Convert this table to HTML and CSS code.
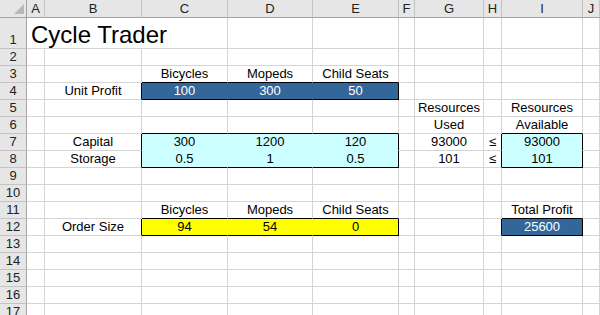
FILE: index.html
```html
<!DOCTYPE html>
<html lang="en">
<head>
<meta charset="utf-8">
<title>Cycle Trader</title>
<link rel="stylesheet" href="styles.css">
</head>
<body>
<table class="sheet">
  <colgroup>
    <col class="w-rh"><col class="w-a"><col class="w-b"><col class="w-c"><col class="w-d">
    <col class="w-e"><col class="w-f"><col class="w-g"><col class="w-h"><col class="w-i"><col class="w-j">
  </colgroup>
  <thead>
    <tr class="row-hdr">
      <th class="corner"><svg class="corner-mark" width="10" height="10" viewBox="0 0 10 10"><polygon points="10,0 10,10 0,10" /></svg></th>
      <th class="colh">A</th><th class="colh">B</th><th class="colh">C</th><th class="colh">D</th><th class="colh">E</th>
      <th class="colh">F</th><th class="colh">G</th><th class="colh">H</th><th class="colh">I</th><th class="colh">J</th>
    </tr>
  </thead>
  <tbody>
    <tr class="row-title">
      <th class="rowh">1</th>
      <td class="title" colspan="3">Cycle Trader</td>
      <td></td><td></td><td></td><td></td><td></td><td></td><td></td>
    </tr>
    <tr>
      <th class="rowh">2</th>
      <td></td><td></td><td></td><td></td><td></td><td></td><td></td><td></td><td></td><td></td>
    </tr>
    <tr>
      <th class="rowh">3</th>
      <td></td><td></td><td class="nb">Bicycles</td><td class="nb">Mopeds</td><td class="nb">Child Seats</td>
      <td></td><td></td><td></td><td></td><td></td>
    </tr>
    <tr>
      <th class="rowh">4</th>
      <td></td><td class="nr">Unit Profit</td>
      <td class="blue ob">100</td><td class="blue ob">300</td><td class="blue ob or">50</td>
      <td></td><td></td><td></td><td></td><td></td>
    </tr>
    <tr>
      <th class="rowh">5</th>
      <td></td><td></td><td></td><td></td><td></td><td></td>
      <td>Resources</td><td></td><td>Resources</td><td></td>
    </tr>
    <tr>
      <th class="rowh">6</th>
      <td></td><td></td><td class="nb"></td><td class="nb"></td><td class="nb"></td><td></td>
      <td>Used</td><td></td><td class="nb">Available</td><td></td>
    </tr>
    <tr>
      <th class="rowh">7</th>
      <td></td><td class="nr">Capital</td>
      <td class="cyan">300</td><td class="cyan">1200</td><td class="cyan or">120</td>
      <td></td><td>93000</td><td class="nr">≤</td><td class="cyan or">93000</td><td></td>
    </tr>
    <tr>
      <th class="rowh">8</th>
      <td></td><td class="nr">Storage</td>
      <td class="cyan ob">0.5</td><td class="cyan ob">1</td><td class="cyan ob or">0.5</td>
      <td></td><td>101</td><td class="nr">≤</td><td class="cyan ob or">101</td><td></td>
    </tr>
    <tr>
      <th class="rowh">9</th>
      <td></td><td></td><td></td><td></td><td></td><td></td><td></td><td></td><td></td><td></td>
    </tr>
    <tr>
      <th class="rowh">10</th>
      <td></td><td></td><td></td><td></td><td></td><td></td><td></td><td></td><td></td><td></td>
    </tr>
    <tr>
      <th class="rowh">11</th>
      <td></td><td></td><td class="nb">Bicycles</td><td class="nb">Mopeds</td><td class="nb">Child Seats</td>
      <td></td><td></td><td></td><td class="nb">Total Profit</td><td></td>
    </tr>
    <tr>
      <th class="rowh">12</th>
      <td></td><td class="nr">Order Size</td>
      <td class="yellow ob">94</td><td class="yellow ob">54</td><td class="yellow ob or">0</td>
      <td></td><td></td><td class="nr"></td><td class="blue ob or">25600</td><td></td>
    </tr>
    <tr>
      <th class="rowh">13</th>
      <td></td><td></td><td></td><td></td><td></td><td></td><td></td><td></td><td></td><td></td>
    </tr>
    <tr>
      <th class="rowh">14</th>
      <td></td><td></td><td></td><td></td><td></td><td></td><td></td><td></td><td></td><td></td>
    </tr>
    <tr>
      <th class="rowh">15</th>
      <td></td><td></td><td></td><td></td><td></td><td></td><td></td><td></td><td></td><td></td>
    </tr>
    <tr>
      <th class="rowh">16</th>
      <td></td><td></td><td></td><td></td><td></td><td></td><td></td><td></td><td></td><td></td>
    </tr>
    <tr>
      <th class="rowh">17</th>
      <td></td><td></td><td></td><td></td><td></td><td></td><td></td><td></td><td></td><td></td>
    </tr>
  </tbody>
</table>
</body>
</html>
```

FILE: styles.css
```css
html, body {
  margin: 0;
  padding: 0;
  background: #ffffff;
  overflow: hidden;
}

.sheet {
  width: 600px;
  table-layout: fixed;
  border-collapse: separate;
  border-spacing: 0;
  font-family: "Liberation Sans", Arial, sans-serif;
  font-size: 13px;
  color: #000000;
}

/* column widths, each including its right gridline */
.w-rh { width: 27px; }
.w-a  { width: 18px; }
.w-b  { width: 97px; }
.w-c  { width: 86px; }
.w-d  { width: 85px; }
.w-e  { width: 86px; }
.w-f  { width: 16px; }
.w-g  { width: 69px; }
.w-h  { width: 18px; }
.w-i  { width: 81px; }
.w-j  { width: 17px; }

.sheet tr { height: 17px; }
.sheet .row-hdr { height: 18px; }
.sheet .row-title { height: 31px; }

.sheet th,
.sheet td {
  box-sizing: border-box;
  padding: 0 2px;
  line-height: 16px;
  vertical-align: bottom;
  text-align: center;
  white-space: nowrap;
  overflow: hidden;
  border-right: 1px solid #d4d4d4;
  border-bottom: 1px solid #d4d4d4;
}

/* headers */
.sheet th {
  font-weight: normal;
  background: #e6e6e6;
  color: #222222;
}
.sheet .colh {
  border-right-color: #c3c3c3;
  border-bottom-color: #a3a3a3;
}
.sheet .rowh {
  border-right-color: #a3a3a3;
  border-bottom-color: #c3c3c3;
}
.sheet .corner {
  text-align: right;
  padding: 0 2px 3px 0;
  border-right-color: #a3a3a3;
  border-bottom-color: #a3a3a3;
  line-height: 0;
}
.corner-mark {
  display: inline-block;
  fill: #b7b7b7;
}

/* title in A1, spilling over B and C */
.sheet .title {
  text-align: left;
  padding-left: 4px;
  font-size: 24px;
  line-height: 27px;
  overflow: visible;
}

/* fills: interior gridlines take the fill colour */
.sheet .blue {
  background: #336699;
  color: #ffffff;
  border-right-color: #336699;
  border-bottom-color: #336699;
}
.sheet .cyan {
  background: #ccffff;
  border-right-color: #ccffff;
  border-bottom-color: #ccffff;
}
.sheet .yellow {
  background: #ffff00;
  border-right-color: #ffff00;
  border-bottom-color: #ffff00;
}

/* range outlines */
.sheet .ob,
.sheet .nb { border-bottom-color: #000000; }
.sheet .or,
.sheet .nr { border-right-color: #000000; }
```
